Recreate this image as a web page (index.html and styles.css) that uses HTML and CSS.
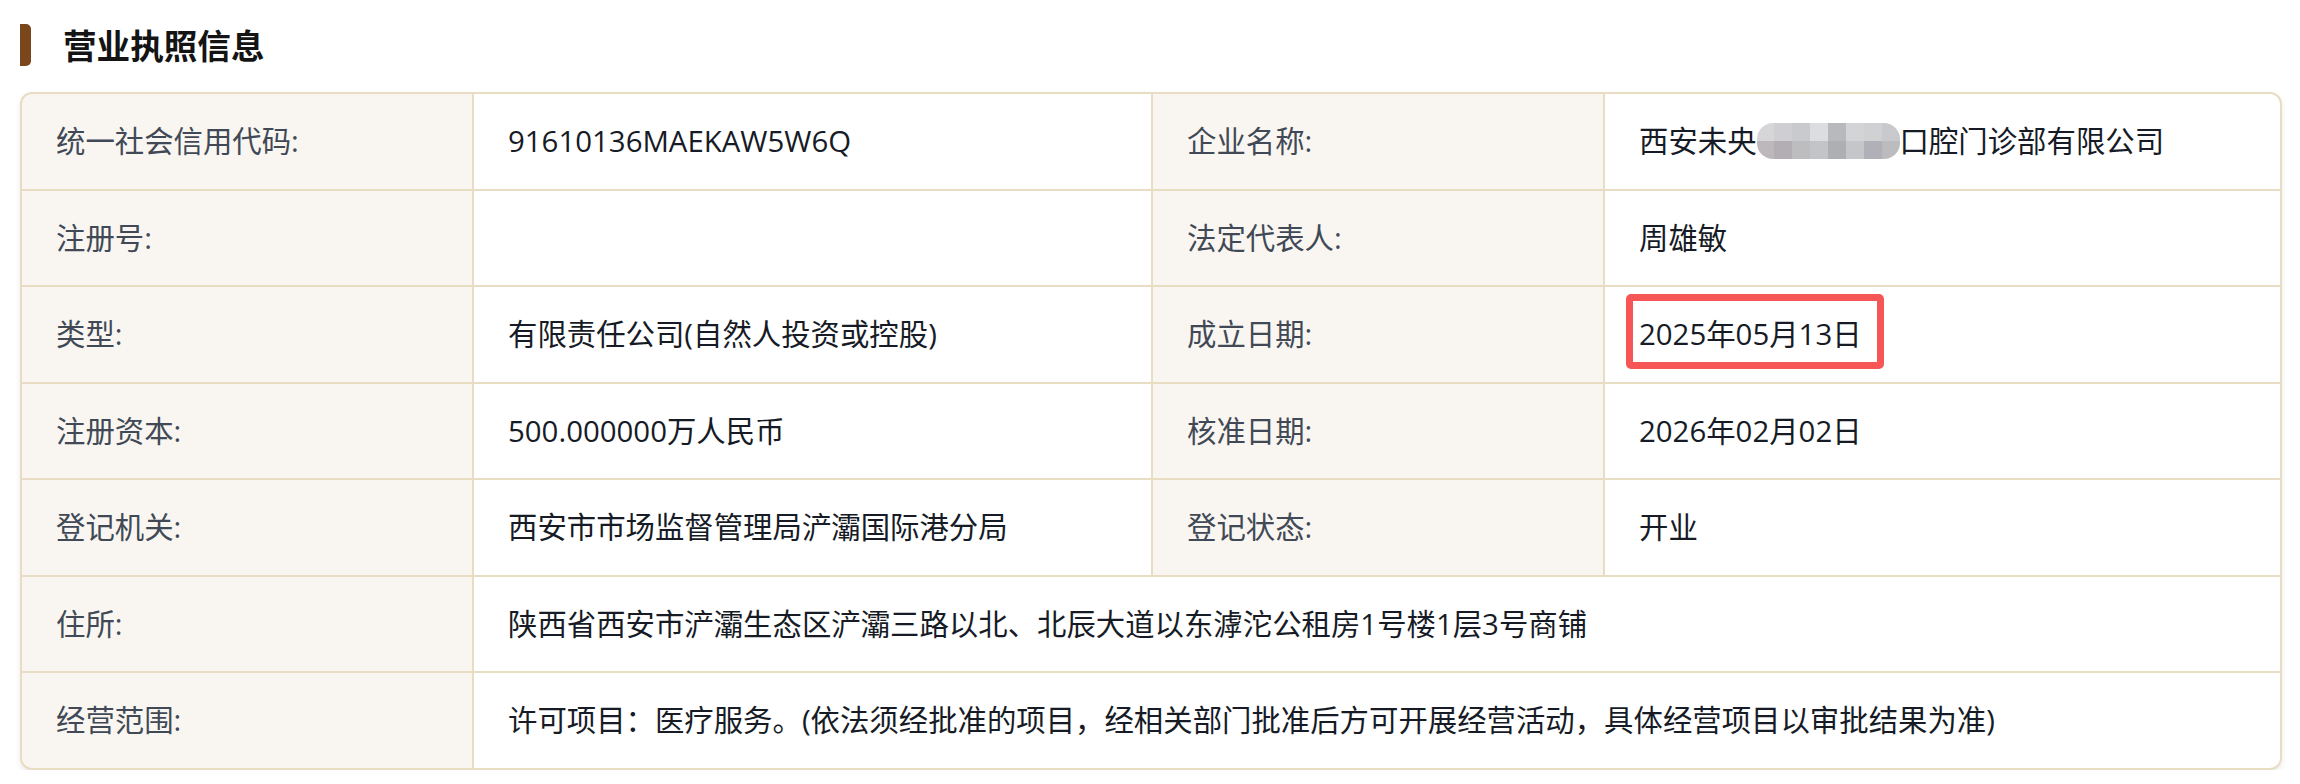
FILE: index.html
```html
<!DOCTYPE html>
<html lang="zh-CN">
<head>
<meta charset="utf-8">
<title>营业执照信息</title>
<link rel="stylesheet" href="styles.css">
</head>
<body>
<div class="page">
  <div class="section-title">
    <span class="bar"></span>
    <h2>营业执照信息</h2>
  </div>
  <div class="info-table">
    <div class="cell label">统一社会信用代码:</div>
    <div class="cell value">91610136MAEKAW5W6Q</div>
    <div class="cell label">企业名称:</div>
    <div class="cell value"><span>西安未央<span class="mosaic"><i></i><i></i><i></i><i></i><i></i><i></i><i></i><i></i><i></i><i></i><i></i><i></i><i></i><i></i><i></i><i></i></span>口腔门诊部有限公司</span></div>

    <div class="cell label">注册号:</div>
    <div class="cell value"></div>
    <div class="cell label">法定代表人:</div>
    <div class="cell value">周雄敏</div>

    <div class="cell label">类型:</div>
    <div class="cell value">有限责任公司(自然人投资或控股)</div>
    <div class="cell label">成立日期:</div>
    <div class="cell value"><span class="highlight">2025年05月13日</span></div>

    <div class="cell label">注册资本:</div>
    <div class="cell value">500.000000万人民币</div>
    <div class="cell label">核准日期:</div>
    <div class="cell value">2026年02月02日</div>

    <div class="cell label">登记机关:</div>
    <div class="cell value">西安市市场监督管理局浐灞国际港分局</div>
    <div class="cell label">登记状态:</div>
    <div class="cell value">开业</div>

    <div class="cell label">住所:</div>
    <div class="cell value wide">陕西省西安市浐灞生态区浐灞三路以北、北辰大道以东滹沱公租房1号楼1层3号商铺</div>

    <div class="cell label">经营范围:</div>
    <div class="cell value wide">许可项目：医疗服务。(依法须经批准的项目，经相关部门批准后方可开展经营活动，具体经营项目以审批结果为准)</div>
  </div>
</div>
</body>
</html>
```

FILE: styles.css
```css
html, body {
  margin: 0;
  padding: 0;
  background: #ffffff;
}

body {
  font-family: "Open Sans", "Noto Sans CJK SC", "Noto Sans", sans-serif;
  overflow: hidden;
}

.page {
  padding: 24px 18px 0 20px;
}

.section-title {
  display: flex;
  align-items: center;
  gap: 32px;
  height: 42px;
  margin-bottom: 26px;
}

.bar {
  width: 11px;
  height: 42px;
  background: #7a461c;
  border-radius: 0 5px 5px 0;
}

.section-title h2 {
  margin: 0;
  font-family: "Noto Sans CJK SC", sans-serif;
  font-size: 33.6px;
  font-weight: 700;
  color: #141414;
  line-height: 42px;
}

.info-table {
  display: grid;
  grid-template-columns: 450px 677px 450px 1fr;
  grid-auto-rows: 94.5px;
  gap: 2px;
  background: #e8dcc3;
  border: 2px solid #e8dcc3;
  border-radius: 12px;
  overflow: hidden;
  box-shadow: 0 3px 6px rgba(0, 0, 0, 0.08);
}

.cell {
  display: flex;
  align-items: center;
  padding: 0 20px 0 34px;
  font-size: 29.4px;
  line-height: 40px;
  white-space: nowrap;
}

.label {
  background: #f9f6f1;
  color: #414956;
}

.value {
  background: #ffffff;
  color: #161b26;
}

.wide {
  grid-column: span 3;
}

.mosaic {
  display: inline-grid;
  grid-template-columns: repeat(8, 1fr);
  grid-template-rows: 1fr 1fr;
  width: 143px;
  height: 36px;
  border-radius: 16px;
  overflow: hidden;
  vertical-align: middle;
  position: relative;
  top: -3px;
  filter: blur(0.7px);
}

.mosaic i:nth-child(1) { background: #d6d5d8; }
.mosaic i:nth-child(2) { background: #cfcfd3; }
.mosaic i:nth-child(3) { background: #c8cacd; }
.mosaic i:nth-child(4) { background: #dcdde0; }
.mosaic i:nth-child(5) { background: #b8b9bd; }
.mosaic i:nth-child(6) { background: #d3d4d6; }
.mosaic i:nth-child(7) { background: #cfd1d3; }
.mosaic i:nth-child(8) { background: #c7c9cc; }
.mosaic i:nth-child(9) { background: #bcb8bc; }
.mosaic i:nth-child(10) { background: #b3aeb3; }
.mosaic i:nth-child(11) { background: #bdbdbf; }
.mosaic i:nth-child(12) { background: #c3c4c7; }
.mosaic i:nth-child(13) { background: #aeafb3; }
.mosaic i:nth-child(14) { background: #c5c6c9; }
.mosaic i:nth-child(15) { background: #b1afb7; }
.mosaic i:nth-child(16) { background: #bcbcbe; }

.highlight {
  position: relative;
  display: inline-block;
}

.highlight::after {
  content: "";
  position: absolute;
  left: -13px;
  top: -20px;
  width: 258px;
  height: 75px;
  box-sizing: border-box;
  border: 7px solid #f75656;
  border-radius: 5px;
}
```
